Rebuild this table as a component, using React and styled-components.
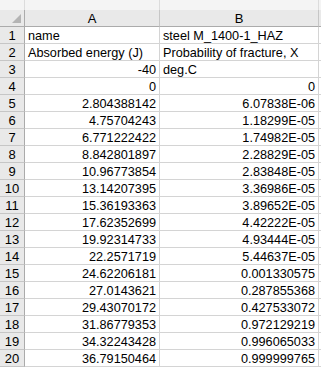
import React from "react";
import styled, { createGlobalStyle } from "styled-components";

const GlobalStyle = createGlobalStyle`
  html, body {
    margin: 0;
    padding: 0;
    background: #ffffff;
  }
  body {
    font-family: "Liberation Sans", Arial, sans-serif;
  }
`;

const Sheet = styled.div`
  width: 321px;
  height: 369px;
  overflow: hidden;
  background: #ffffff;
`;

const TopStrip = styled.div`
  display: grid;
  grid-template-columns: 25px 135px 159px 2px;
  height: 10px;
  background: #f4f4f4;
`;

const StripCell = styled.div`
  border-right: 1px solid #dcdcdc;
  box-sizing: border-box;
`;

const Grid = styled.div`
  display: grid;
  grid-template-columns: 25px 135px 159px 2px;
  grid-auto-rows: 17px;
  font-size: 12.7px;
  color: #000;
`;

const Corner = styled.div`
  position: relative;
  background: #e9e9e9;
  border-right: 1px solid #ababab;
  border-bottom: 1px solid #ababab;
  box-sizing: border-box;

  &::after {
    content: "";
    position: absolute;
    right: 3px;
    bottom: 3px;
    width: 0;
    height: 0;
    border-left: 9px solid transparent;
    border-bottom: 9px solid #b4b4b4;
  }
`;

const ColHead = styled.div`
  display: flex;
  align-items: center;
  justify-content: center;
  background: #e9e9e9;
  border-right: 1px solid #c6c6c6;
  border-bottom: 1px solid #ababab;
  box-sizing: border-box;
  padding-top: 1px;
  font-size: 13px;
`;

const RowHead = styled.div`
  display: flex;
  align-items: center;
  justify-content: center;
  background: #e9e9e9;
  border-right: 1px solid #ababab;
  border-bottom: 1px solid #c6c6c6;
  box-sizing: border-box;
  padding-top: 1px;
  font-size: 13px;
`;

const Cell = styled.div`
  display: flex;
  align-items: center;
  justify-content: ${(p) => (p.$num ? "flex-end" : "flex-start")};
  padding: 1px 3px 0 3px;
  border-right: 1px solid #d4d4d4;
  border-bottom: 1px solid #d4d4d4;
  box-sizing: border-box;
  white-space: nowrap;
  overflow: visible;
`;

const Edge = styled.div`
  background: ${(p) => (p.$head ? "#e9e9e9" : "#ffffff")};
  border-bottom: 1px solid ${(p) => (p.$head ? "#ababab" : "#d4d4d4")};
  box-sizing: border-box;
`;

const rows = [
  ["name", false, "steel M_1400-1_HAZ", false],
  ["Absorbed energy (J)", false, "Probability of fracture, X", false],
  ["-40", true, "deg.C", false],
  ["0", true, "0", true],
  ["2.804388142", true, "6.07838E-06", true],
  ["4.75704243", true, "1.18299E-05", true],
  ["6.771222422", true, "1.74982E-05", true],
  ["8.842801897", true, "2.28829E-05", true],
  ["10.96773854", true, "2.83848E-05", true],
  ["13.14207395", true, "3.36986E-05", true],
  ["15.36193363", true, "3.89652E-05", true],
  ["17.62352699", true, "4.42222E-05", true],
  ["19.92314733", true, "4.93444E-05", true],
  ["22.2571719", true, "5.44637E-05", true],
  ["24.62206181", true, "0.001330575", true],
  ["27.0143621", true, "0.287855368", true],
  ["29.43070172", true, "0.427533072", true],
  ["31.86779353", true, "0.972129219", true],
  ["34.32243428", true, "0.996065033", true],
  ["36.79150464", true, "0.999999765", true],
];

export default function App() {
  return (
    <Sheet>
      <GlobalStyle />
      <TopStrip>
        <StripCell />
        <StripCell />
        <StripCell />
        <div />
      </TopStrip>
      <Grid>
        <Corner />
        <ColHead>A</ColHead>
        <ColHead>B</ColHead>
        <Edge $head />
        {rows.map(([a, aNum, b, bNum], i) => (
          <React.Fragment key={i}>
            <RowHead>{i + 1}</RowHead>
            <Cell $num={aNum}>{a}</Cell>
            <Cell $num={bNum}>{b}</Cell>
            <Edge />
          </React.Fragment>
        ))}
      </Grid>
    </Sheet>
  );
}
